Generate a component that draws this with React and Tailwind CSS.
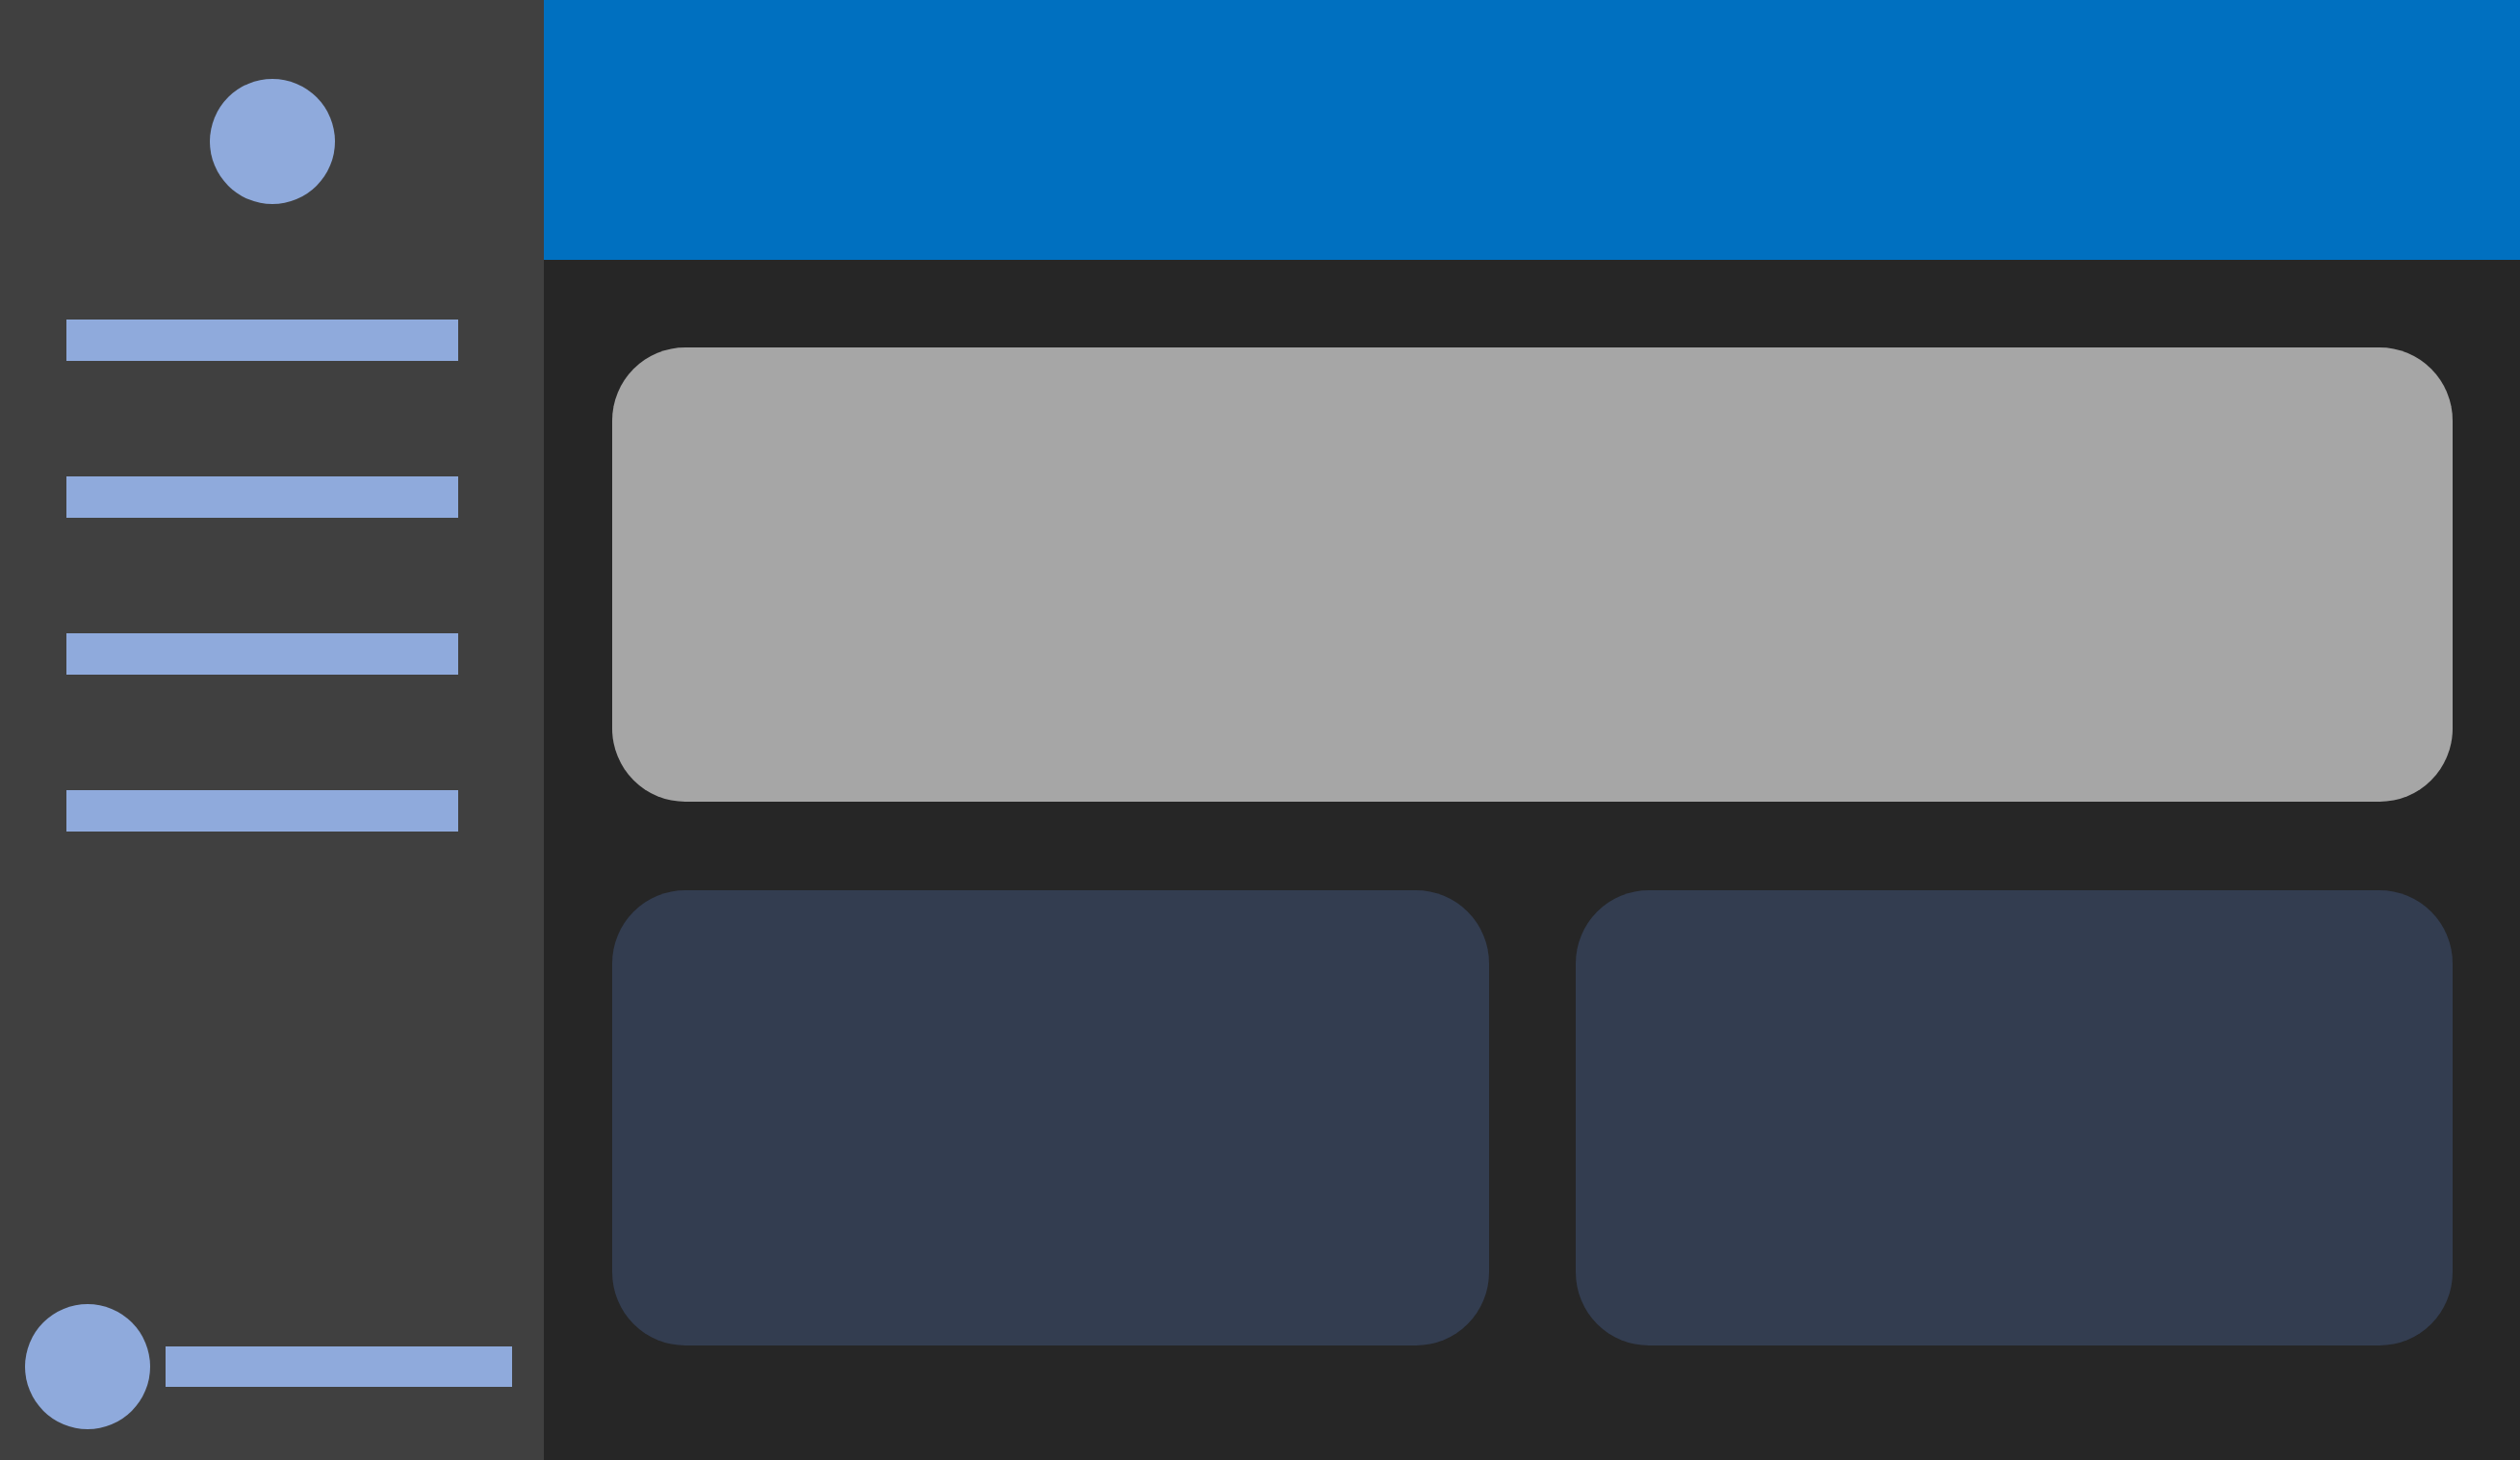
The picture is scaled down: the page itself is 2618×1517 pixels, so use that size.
import React from 'react';

const NavBar = () => <div className="h-[43px] w-[407px] bg-[#8faadc]" />;

const App = () => {
  return (
    <div className="flex h-screen w-full overflow-hidden bg-[#262626]">
      {/* sidebar */}
      <aside className="flex h-full w-[565px] shrink-0 flex-col bg-[#404040]">
        <div className="mx-auto mt-[82px] h-[130px] w-[130px] rounded-full bg-[#8faadc]" />
        <nav className="mt-[120px] flex flex-col gap-[120px] pl-[69px]">
          <NavBar />
          <NavBar />
          <NavBar />
          <NavBar />
        </nav>
        <div className="flex-1" />
        <div className="mb-[32px] flex items-center gap-[16px] pl-[26px]">
          <div className="h-[130px] w-[130px] rounded-full bg-[#8faadc]" />
          <div className="h-[42px] w-[360px] bg-[#8faadc]" />
        </div>
      </aside>

      {/* main */}
      <main className="flex h-full flex-1 flex-col">
        <header className="h-[270px] w-full shrink-0 bg-[#0070c0]" />
        <div className="flex flex-col gap-[92px] pl-[71px] pr-[70px] pt-[91px]">
          <div className="h-[472px] w-full rounded-[76px] bg-[#a6a6a6]" />
          <div className="grid grid-cols-2 gap-[90px]">
            <div className="h-[473px] rounded-[76px] bg-[#333d50]" />
            <div className="h-[473px] rounded-[76px] bg-[#333d50]" />
          </div>
        </div>
      </main>
    </div>
  );
};

export default App;
